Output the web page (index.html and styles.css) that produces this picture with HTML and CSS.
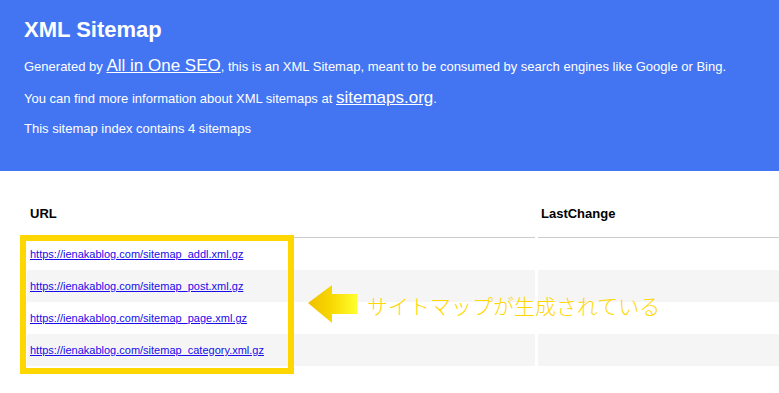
FILE: index.html
```html
<!DOCTYPE html>
<html lang="ja">
<head>
<meta charset="utf-8">
<title>XML Sitemap</title>
<link rel="stylesheet" href="styles.css">
</head>
<body>
<header class="intro">
  <h1 class="title">XML Sitemap</h1>
  <p class="lead">Generated by <a class="big" href="#">All in One SEO</a>, this is an XML Sitemap, meant to be consumed by search engines like Google or Bing.</p>
  <p class="more">You can find more information about XML sitemaps at <a class="big" href="#">sitemaps.org</a>.</p>
  <p class="count">This sitemap index contains 4 sitemaps</p>
</header>
<main class="content">
  <table class="sitemap">
    <thead>
      <tr><th class="col-url">URL</th><th>LastChange</th></tr>
    </thead>
    <tbody>
      <tr><td><a href="#">https://ienakablog.com/sitemap_addl.xml.gz</a></td><td></td></tr>
      <tr class="alt"><td><a href="#">https://ienakablog.com/sitemap_post.xml.gz</a></td><td></td></tr>
      <tr><td><a href="#">https://ienakablog.com/sitemap_page.xml.gz</a></td><td></td></tr>
      <tr class="alt"><td><a href="#">https://ienakablog.com/sitemap_category.xml.gz</a></td><td></td></tr>
    </tbody>
  </table>
  <div class="highlight"></div>
  <svg class="arrow" width="50" height="40" viewBox="0 0 50 40">
    <defs>
      <linearGradient id="ag" x1="0" y1="0" x2="1" y2="0">
        <stop offset="0" stop-color="#f0c000"/>
        <stop offset="0.45" stop-color="#f7d600"/>
        <stop offset="1" stop-color="#ffff2e"/>
      </linearGradient>
    </defs>
    <path d="M0 18 L24 0 L24 9 L49 9 L49 29 L24 29 L24 38 Z" fill="url(#ag)"/>
  </svg>
  <div class="note">サイトマップが生成されている</div>
</main>
</body>
</html>
```

FILE: styles.css
```css
html {
  overflow: hidden;
}

body {
  margin: 0;
  padding: 0;
  background: #fff;
  font-family: "Liberation Sans", Arial, sans-serif;
}

.intro {
  background: #4375f3;
  color: #fff;
  height: 171px;
  box-sizing: border-box;
  padding: 17px 24px 0 24px;
}

.title {
  margin: 0;
  font-size: 22px;
  line-height: 26px;
  font-weight: bold;
}

.intro p {
  margin: 0;
  font-size: 13px;
  line-height: 20px;
}

.intro .lead { margin-top: 14px; }
.intro .more { margin-top: 12px; }
.intro .count { margin-top: 10px; }

.intro a {
  color: #fff;
  text-decoration: underline;
}

.intro .big {
  font-size: 17px;
  line-height: 13px;
}

.content {
  position: relative;
  padding: 20px 0 40px 24px;
}

.sitemap {
  width: calc(100% + 10px);
  border-collapse: separate;
  border-spacing: 3px 0;
  table-layout: fixed;
}

.sitemap th {
  text-align: left;
  font-size: 13px;
  line-height: 16px;
  font-weight: bold;
  color: #000;
  padding: 15px 3px;
  border-bottom: 1px solid #cccccc;
}

.sitemap .col-url { width: 502px; }

.sitemap td {
  font-size: 11px;
  line-height: 14px;
  padding: 9px 3px;
  white-space: nowrap;
}

.sitemap .alt td { background: #f5f5f5; }

.sitemap a {
  color: #1a0bea;
  text-decoration: underline;
}

.highlight {
  position: absolute;
  left: 20px;
  top: 64px;
  width: 274px;
  height: 139px;
  box-sizing: border-box;
  border: 6px solid #ffd700;
}

.arrow {
  position: absolute;
  left: 308px;
  top: 114px;
  display: block;
}

.note {
  position: absolute;
  left: 367px;
  top: 121px;
  font-family: "Noto Sans CJK JP", sans-serif;
  font-weight: 300;
  font-size: 21px;
  line-height: 26px;
  color: #ffd700;
  white-space: nowrap;
}
```
